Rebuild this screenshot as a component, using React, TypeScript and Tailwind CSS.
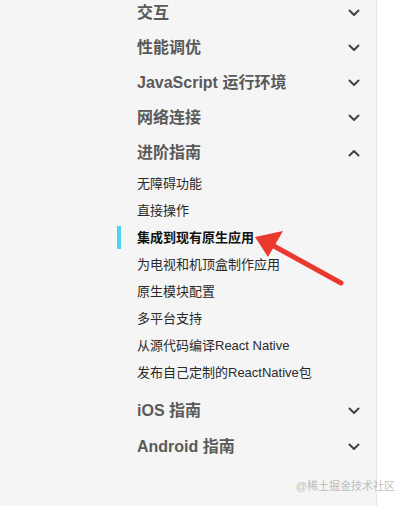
import React from "react";

const FONT = { fontFamily: '"Liberation Sans", "Noto Sans CJK SC", sans-serif' };

function Chevron({ up = false }: { up?: boolean }) {
  return (
    <svg width="12" height="8" viewBox="0 0 12 8" className="shrink-0">
      <path
        d={up ? "M1.5 6.5 L6 2 L10.5 6.5" : "M1.5 1.5 L6 6 L10.5 1.5"}
        fill="none"
        stroke="#444"
        strokeWidth="2"
        strokeLinecap="round"
        strokeLinejoin="round"
      />
    </svg>
  );
}

function Header({ label, up = false, tall = false }: { label: string; up?: boolean; tall?: boolean }) {
  return (
    <div className={`flex items-center justify-between ${tall ? "h-[36px]" : "h-[35px]"}`}>
      <span className="text-[16px] font-semibold text-[#5a5a5a] leading-none">{label}</span>
      <span className="mr-[1px]">
        <Chevron up={up} />
      </span>
    </div>
  );
}

const subs = [
  "无障碍功能",
  "直接操作",
  "集成到现有原生应用",
  "为电视和机顶盒制作应用",
  "原生模块配置",
  "多平台支持",
  "从源代码编译React Native",
  "发布自己定制的ReactNative包",
];

export default function App() {
  return (
    <div className="relative w-[408px] h-[506px] overflow-hidden bg-white" style={FONT}>
      <div className="flex flex-col w-[377px] h-full bg-[#f5f5f5] border-r border-[#e6e6e6]">
        <div className="pl-[137px] pr-[15px] -mt-[5px]">
          <Header label="交互" />
          <Header label="性能调优" />
          <Header label="JavaScript 运行环境" />
          <Header label="网络连接" />
          <Header label="进阶指南" up />
          <div className="flex flex-col">
            {subs.map((s, i) =>
              i === 2 ? (
                <div key={s} className="flex items-center h-[27px] -ml-[20px]">
                  <div className="w-[4px] h-[23px] bg-[#4fd2f0] mr-[16px]" />
                  <span className="text-[13px] font-bold text-[#111]">{s}</span>
                </div>
              ) : (
                <div key={s} className="flex items-center h-[27px]">
                  <span className="text-[13px] text-[#2a2a2a]">{s}</span>
                </div>
              )
            )}
          </div>
          <div className="mt-[7px]">
            <Header label="iOS 指南" tall />
            <Header label="Android 指南" tall />
          </div>
        </div>
      </div>

      <svg className="absolute left-0 top-0 pointer-events-none" width="408" height="506">
        <line x1="272" y1="245" x2="341" y2="283" stroke="#ea3a2f" strokeWidth="5" strokeLinecap="round" />
        <polygon points="255,237 283,231 268,257" fill="#ea3a2f" />
      </svg>

      <div className="absolute right-[13px] top-[481px] text-[11px] text-[#bdbdbd] leading-none">@稀土掘金技术社区</div>
    </div>
  );
}
